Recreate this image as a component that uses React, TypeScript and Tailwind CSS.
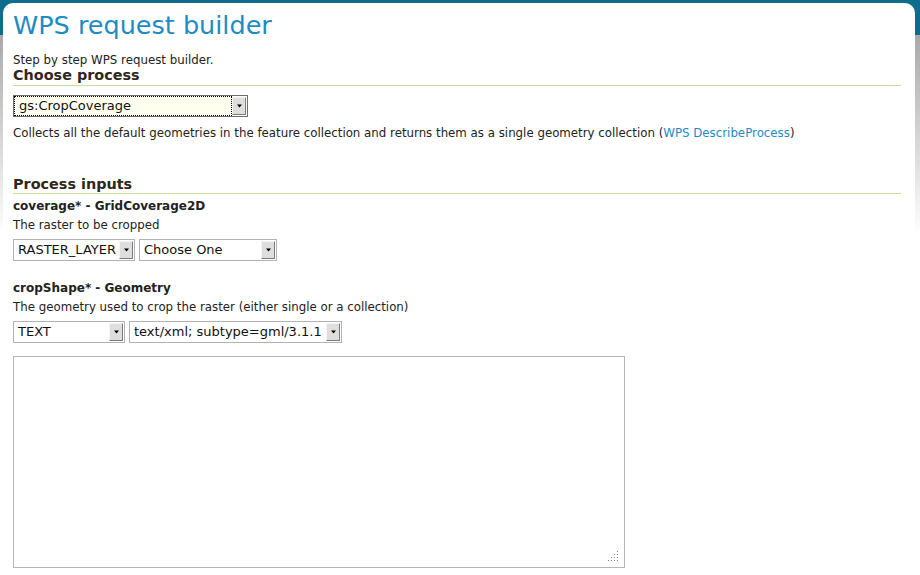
import React from "react";

function Arrow() {
  return (
    <div className="flex h-full w-[14px] items-center justify-center border-t border-l border-t-[#f4f4f4] border-l-[#f4f4f4] border-r border-b border-r-[#7a7a7a] border-b-[#7a7a7a] bg-[#dedede]">
      <svg width="7" height="4" viewBox="0 0 7 4">
        <path d="M1 0.5 L6 0.5 L3.5 3.5 Z" fill="#000" />
      </svg>
    </div>
  );
}

function Select({ label, w, focus }: { label: string; w: number; focus?: boolean }) {
  return (
    <div
      style={{ width: w }}
      className={
        "flex h-[22px] shrink-0 items-stretch border " +
        (focus ? "border-[#6d6d6d] bg-[#fffff0]" : "border-[#b3b3b3] bg-white")
      }
    >
      <div
        className={
          "flex flex-1 items-center overflow-hidden whitespace-nowrap pl-[4px] text-[13px] text-[#111] " +
          (focus ? "border border-dotted border-black pl-[3px]" : "")
        }
      >
        {label}
      </div>
      <div className="py-[1px] pr-[1px]">
        <Arrow />
      </div>
    </div>
  );
}

export default function App() {
  return (
    <div className="h-[575px] w-[920px] overflow-hidden bg-[linear-gradient(to_bottom,#0e6c8c_0px,#0e6c8c_35px,#a9a9a9_35px,#ffffff_235px)] font-['DejaVu_Sans',sans-serif] text-[#222]">
      <div className="ml-[3px] mr-[5px] mt-[3px] h-[572px] rounded-t-[10px] bg-white pl-[10px] pr-[14px]">
        <h1 className="pt-[6px] text-[25.5px] leading-[32px] text-[#1e8bc2]">WPS request builder</h1>
        <p className="mt-[12px] text-[11.8px] leading-[14px]">Step by step WPS request builder.</p>
        <h2 className="border-b border-[#c6df98] pb-[2px] text-[14.4px] font-bold leading-[16px] text-[#2d2820]">
          Choose process
        </h2>
        <div className="mt-[9px]">
          <Select label="gs:CropCoverage" w={235} focus />
        </div>
        <p className="mt-[9px] text-[11.8px] leading-[14px]">
          Collects all the default geometries in the feature collection and returns them as a single geometry
          collection (<span className="text-[#1e8bc2]">WPS DescribeProcess</span>)
        </p>
        <h2 className="mt-[36px] border-b border-[#c6df98] pb-[1px] text-[14.4px] font-bold leading-[16px] text-[#2d2820]">
          Process inputs
        </h2>
        <div className="mt-[5px] text-[12px] font-bold leading-[14px] text-[#222]">coverage* - GridCoverage2D</div>
        <div className="mt-[5px] text-[11.8px] leading-[14px]">The raster to be cropped</div>
        <div className="mt-[7px] flex gap-[4px]">
          <Select label="RASTER_LAYER" w={122} />
          <Select label="Choose One" w={138} />
        </div>
        <div className="mt-[20px] text-[12px] font-bold leading-[14px] text-[#222]">cropShape* - Geometry</div>
        <div className="mt-[5px] text-[11.8px] leading-[14px]">
          The geometry used to crop the raster (either single or a collection)
        </div>
        <div className="mt-[7px] flex gap-[4px]">
          <Select label="TEXT" w={112} />
          <Select label="text/xml; subtype=gml/3.1.1" w={213} />
        </div>
        <div className="relative mt-[13px] h-[212px] w-[612px] border border-[#b5b5b5] bg-white">
          <svg className="absolute bottom-[6px] right-[6px]" width="10" height="10" viewBox="0 0 10 10">
            {[
              [9, 0],
              [6, 3],
              [9, 3],
              [3, 6],
              [6, 6],
              [9, 6],
              [0, 9],
              [3, 9],
              [6, 9],
              [9, 9],
            ].map(([x, y], i) => (
              <rect key={i} x={x} y={y} width="1" height="1" fill="#888" />
            ))}
          </svg>
        </div>
      </div>
    </div>
  );
}
